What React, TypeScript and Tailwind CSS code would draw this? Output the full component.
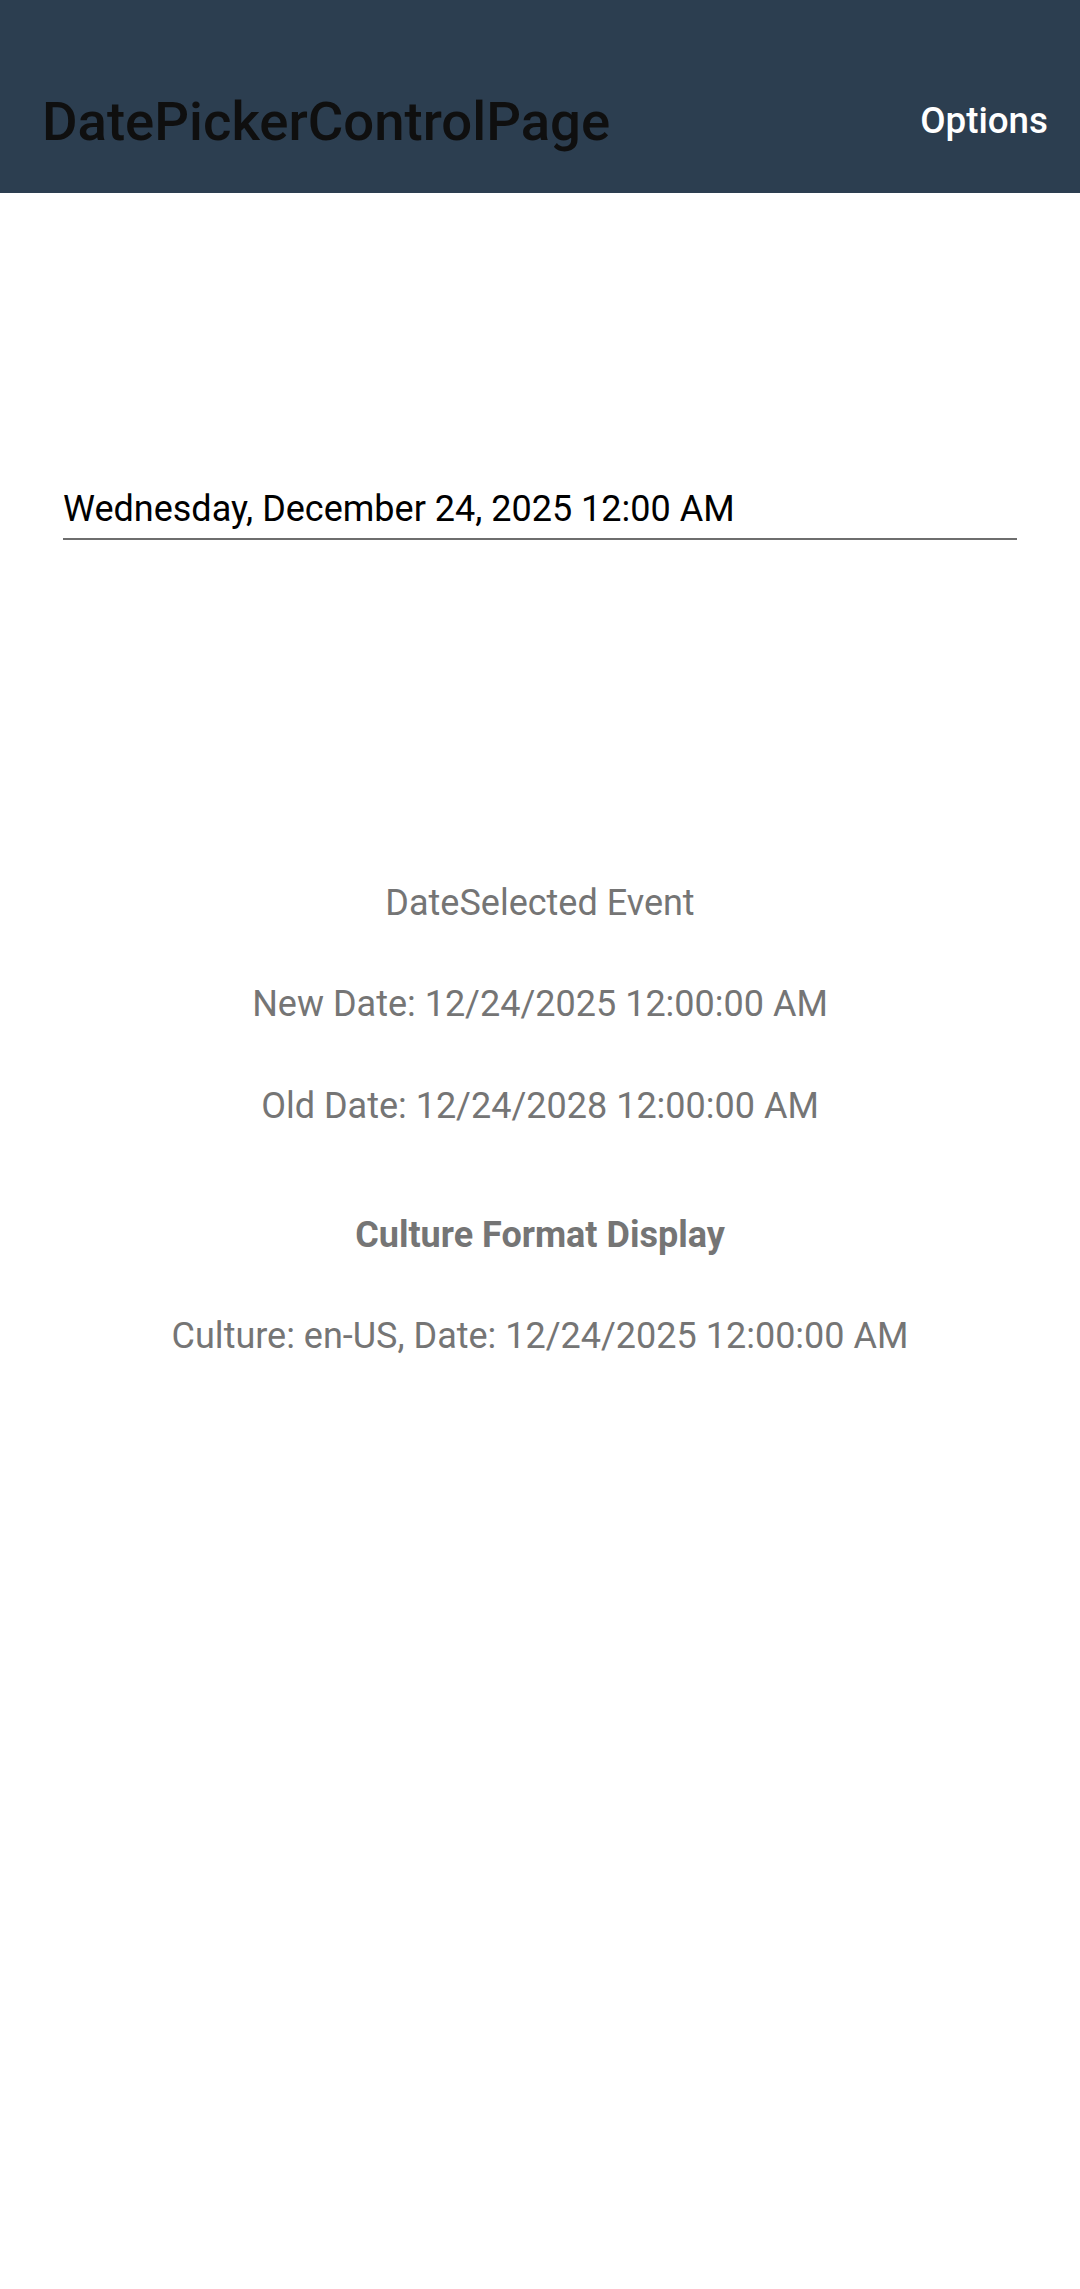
export default function App() {
  return (
    <div className="min-h-screen w-full bg-white font-['Roboto',sans-serif]">
      <header className="flex h-[193px] items-center justify-between bg-[#2c3e50] pl-[42px] pr-[32px] pt-[50px]">
        <h1 className="text-[54.5px] font-medium leading-none text-[#0f0f0f]">DatePickerControlPage</h1>
        <button className="text-[36.75px] font-medium leading-none text-white">Options</button>
      </header>

      <main className="flex flex-col">
        <section className="mx-[63px] mt-[294px]">
          <p className="text-[36px] leading-[44px] text-black">Wednesday, December 24, 2025 12:00 AM</p>
          <div className="mt-[7px] h-[2px] bg-[#6e6e6e]" />
        </section>

        <section className="mt-[341px] flex flex-col items-center text-[36px] leading-[44px] text-[#757575]">
          <p>DateSelected Event</p>
          <p className="mt-[57px]">New Date: 12/24/2025 12:00:00 AM</p>
          <p className="mt-[58px]">Old Date: 12/24/2028 12:00:00 AM</p>
          <p className="mt-[85px] font-bold">Culture Format Display</p>
          <p className="mt-[57px]">Culture: en-US, Date: 12/24/2025 12:00:00 AM</p>
        </section>
      </main>
    </div>
  );
}
